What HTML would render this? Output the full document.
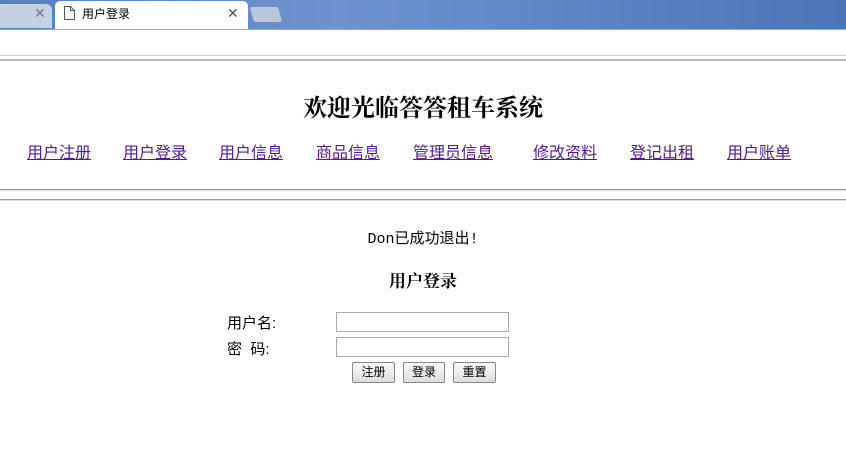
<!DOCTYPE html>
<html><head><meta charset="utf-8"><style>
body{margin:0;width:846px;height:460px;position:relative;background:#fff;overflow:hidden;font-family:"Liberation Sans","Noto Sans CJK SC",sans-serif}
.a{position:absolute;white-space:nowrap}
.nav a{position:absolute;top:139px;font-size:16px;color:#551a8b;text-decoration:underline}
input{position:absolute;width:173px;height:20px;border:1px solid #aaa;box-sizing:border-box;margin:0;padding:0}
.b{position:absolute;top:362px;height:21px;border:1px solid #888;background:linear-gradient(#fafafa,#ddd);font-size:12px;line-height:19px;text-align:center;box-sizing:border-box;border-radius:2px}
</style></head><body>
<div class="a" style="left:0;top:0;width:846px;height:29px;background:linear-gradient(90deg,#5a7fc0,#6d92cf 40%,#4e74b8)"></div>
<div class="a" style="left:0;top:4px;width:52px;height:24px;background:#c4d0e4;border-radius:0 6px 0 0"></div>
<div class="a" style="left:34px;top:5px;font-size:14px;color:#6a7890">✕</div>
<div class="a" style="left:55px;top:1px;width:193px;height:29px;background:#fff;border-radius:5px 5px 0 0"></div>
<svg class="a" style="left:64px;top:6px" width="11" height="14"><path d="M.5 .5h6l4 4v9h-10z M6.5 .5v4h4" fill="none" stroke="#555"/></svg>
<div class="a" style="left:82px;top:5px;font-size:12px;color:#000">用户登录</div>
<div class="a" style="left:227px;top:5px;font-size:14px;color:#555">✕</div>
<div class="a" style="left:251px;top:6px;width:28px;height:15px;background:#b8c6de;border:1px solid #7a90b8;border-radius:3px;transform:skewX(15deg)"></div>
<div class="a" style="left:0;top:29px;width:846px;height:1px;background:#a8a8a8"></div>
<div class="a" style="left:0;top:55px;width:846px;height:1px;background:#d0d0d0"></div>
<div class="a" style="left:0;top:59px;width:846px;height:2px;background:#b8b8b8"></div>
<div class="a" style="left:0;top:88px;width:846px;text-align:center;font-size:24px;font-weight:bold;font-family:'Liberation Serif','Noto Serif CJK SC',serif">欢迎光临答答租车系统</div>
<div class="nav">
<a style="left:27px">用户注册</a><a style="left:123px">用户登录</a><a style="left:219px">用户信息</a><a style="left:316px">商品信息</a><a style="left:413px">管理员信息</a><a style="left:533px">修改资料</a><a style="left:630px">登记出租</a><a style="left:727px">用户账单</a>
</div>
<div class="a" style="left:0;top:189px;width:846px;height:1px;background:#999;border-bottom:1px solid #ddd"></div>
<div class="a" style="left:0;top:199px;width:846px;height:1px;background:#999;border-bottom:1px solid #ddd"></div>
<div class="a" style="left:0;top:227px;width:846px;text-align:center;font-size:15px;font-family:'Liberation Mono','Noto Sans CJK SC',monospace">Don已成功退出!</div>
<div class="a" style="left:0;top:267px;width:846px;text-align:center;font-size:17px;font-weight:bold;font-family:'Liberation Serif','Noto Serif CJK SC',serif">用户登录</div>
<div class="a" style="left:227px;top:312px;font-size:15px">用户名:</div>
<div class="a" style="left:227px;top:338px;font-size:15px">密&nbsp;&nbsp;码:</div>
<input style="left:336px;top:312px"><input style="left:336px;top:337px">
<div class="b" style="left:352px;width:43px">注册</div>
<div class="b" style="left:403px;width:42px">登录</div>
<div class="b" style="left:453px;width:43px">重置</div>
</body></html>
